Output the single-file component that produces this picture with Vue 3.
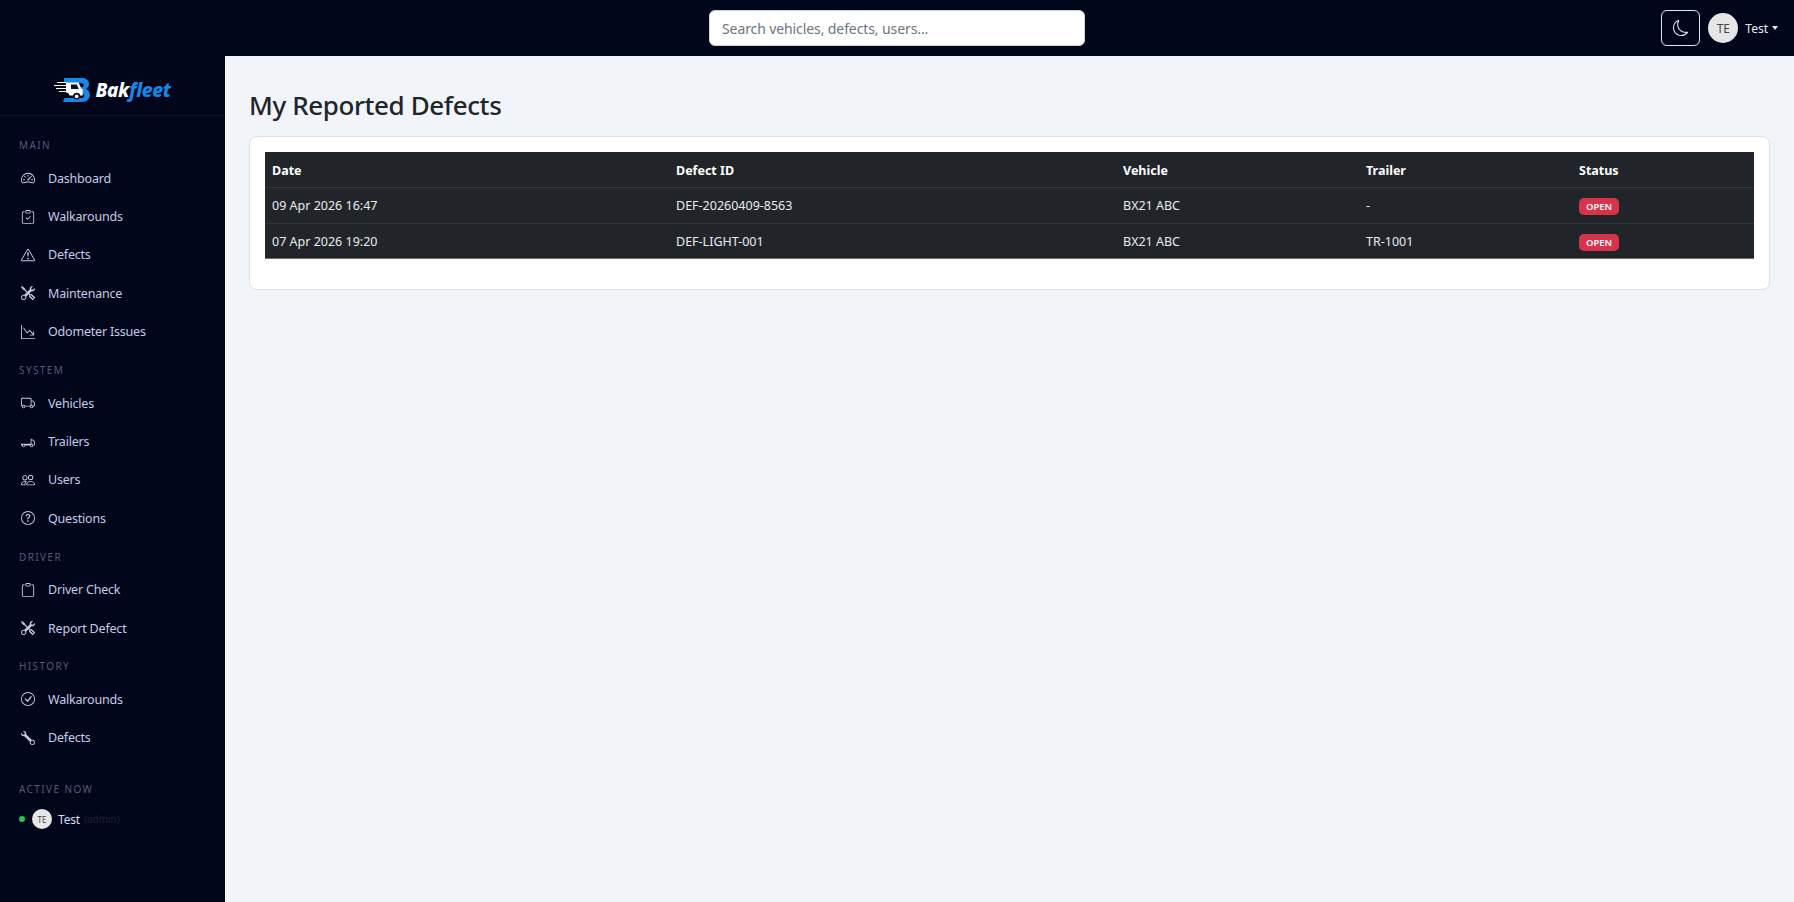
<script setup>
const clipboard = 'M4 1.5H3a2 2 0 0 0-2 2V14a2 2 0 0 0 2 2h10a2 2 0 0 0 2-2V3.5a2 2 0 0 0-2-2h-1v1h1a1 1 0 0 1 1 1V14a1 1 0 0 1-1 1H3a1 1 0 0 1-1-1V3.5a1 1 0 0 1 1-1h1v-1z'
const clipboardTop = 'M9.5 1a.5.5 0 0 1 .5.5v1a.5.5 0 0 1-.5.5h-3a.5.5 0 0 1-.5-.5v-1a.5.5 0 0 1 .5-.5h3zm-3-1A1.5 1.5 0 0 0 5 1.5v1A1.5 1.5 0 0 0 6.5 4h3A1.5 1.5 0 0 0 11 2.5v-1A1.5 1.5 0 0 0 9.5 0h-3z'
const circle = 'M8 15A7 7 0 1 1 8 1a7 7 0 0 1 0 14zm0 1A8 8 0 1 0 8 0a8 8 0 0 0 0 16z'

const icons = {
  gauge: [
    'M8 4a.5.5 0 0 1 .5.5V6a.5.5 0 0 1-1 0V4.5A.5.5 0 0 1 8 4zM3.732 5.732a.5.5 0 0 1 .707 0l.915.914a.5.5 0 1 1-.708.708l-.914-.915a.5.5 0 0 1 0-.707zM2 10a.5.5 0 0 1 .5-.5h1.586a.5.5 0 0 1 0 1H2.5A.5.5 0 0 1 2 10zm9.5 0a.5.5 0 0 1 .5-.5h1.5a.5.5 0 0 1 0 1H12a.5.5 0 0 1-.5-.5zm.754-4.246a.389.389 0 0 0-.527-.02L7.547 9.31a.91.91 0 1 0 1.302 1.258l3.434-4.297a.389.389 0 0 0-.029-.518z',
    'M0 10a8 8 0 1 1 15.547 2.661c-.442 1.253-1.845 1.602-2.932 1.25C11.309 13.488 9.475 13 8 13c-1.474 0-3.31.488-4.615.911-1.087.352-2.49.003-2.932-1.25A7.988 7.988 0 0 1 0 10zm8-7a7 7 0 0 0-6.603 9.329c.203.575.923.876 1.68.63C4.397 12.533 6.358 12 8 12s3.604.532 4.923.96c.757.245 1.477-.056 1.68-.631A7 7 0 0 0 8 3z'
  ],
  clipCheck: [
    'M10.854 7.146a.5.5 0 0 1 0 .708l-3 3a.5.5 0 0 1-.708 0l-1.5-1.5a.5.5 0 1 1 .708-.708L7.5 9.793l2.646-2.647a.5.5 0 0 1 .708 0z',
    clipboard,
    clipboardTop
  ],
  warn: [
    'M7.938 2.016A.13.13 0 0 1 8.002 2a.13.13 0 0 1 .063.016.146.146 0 0 1 .054.057l6.857 11.667c.036.06.035.124.002.183a.163.163 0 0 1-.054.06.116.116 0 0 1-.066.017H1.146a.115.115 0 0 1-.066-.017.163.163 0 0 1-.054-.06.176.176 0 0 1 .002-.183L7.884 2.073a.147.147 0 0 1 .054-.057zm1.044-.45a1.13 1.13 0 0 0-1.96 0L.165 13.233c-.457.778.091 1.767.98 1.767h13.713c.889 0 1.438-.99.98-1.767L8.982 1.566z',
    'M7.002 12a1 1 0 1 1 2 0 1 1 0 0 1-2 0zM7.1 5.995a.905.905 0 1 1 1.8 0l-.35 3.507a.552.552 0 0 1-1.1 0L7.1 5.995z'
  ],
  tools: [
    'M1 0 0 1l2.2 3.081a1 1 0 0 0 .815.419h.07a1 1 0 0 1 .708.293l2.675 2.675-2.617 2.654A3.003 3.003 0 0 0 0 13a3 3 0 1 0 5.878-.851l2.654-2.617.968.968-.305.914a1 1 0 0 0 .242 1.023l3.27 3.27a.997.997 0 0 0 1.414 0l1.586-1.586a.997.997 0 0 0 0-1.414l-3.27-3.27a1 1 0 0 0-1.023-.242L10.5 9.5l-.96-.96 2.68-2.643A3.005 3.005 0 0 0 16 3c0-.269-.035-.53-.102-.777l-2.14 2.141L12 4l-.364-1.757L13.777.102a3 3 0 0 0-3.675 3.68L7.462 6.46 4.793 3.793a1 1 0 0 1-.293-.707v-.071a1 1 0 0 0-.419-.814L1 0zm9.646 10.646a.5.5 0 0 1 .708 0l2.914 2.915a.5.5 0 0 1-.707.707l-2.915-2.914a.5.5 0 0 1 0-.708zM3 11l.471.242.529.026.287.445.445.287.026.529L5 13l-.242.471-.026.529-.445.287-.287.445-.529.026L3 15l-.471-.242L2 14.732l-.287-.445L1.268 14l-.026-.529L1 13l.242-.471.026-.529.445-.287.287-.445.529-.026L3 11z'
  ],
  graph: [
    'M0 0h1v15h15v1H0V0zm10 11.5a.5.5 0 0 0 .5.5h4a.5.5 0 0 0 .5-.5v-4a.5.5 0 0 0-1 0v2.6l-3.613-4.417a.5.5 0 0 0-.74-.037L7.06 8.233 3.404 3.206a.5.5 0 0 0-.808.588l4 5.5a.5.5 0 0 0 .758.06l2.609-2.61L13.445 11H10.5a.5.5 0 0 0-.5.5z'
  ],
  truck: [
    'M0 3.5A1.5 1.5 0 0 1 1.5 2h9A1.5 1.5 0 0 1 12 3.5V5h1.02a1.5 1.5 0 0 1 1.17.563l1.481 1.85a1.5 1.5 0 0 1 .329.938V10.5a1.5 1.5 0 0 1-1.5 1.5H14a2 2 0 1 1-4 0H5a2 2 0 1 1-3.998-.085A1.5 1.5 0 0 1 0 10.5v-7zm1.294 7.456A1.999 1.999 0 0 1 4.732 11h5.536a2.01 2.01 0 0 1 .732-.732V3.5a.5.5 0 0 0-.5-.5h-9a.5.5 0 0 0-.5.5v7a.5.5 0 0 0 .294.456zM12 10a2 2 0 0 1 1.732 1h.768a.5.5 0 0 0 .5-.5V8.35a.5.5 0 0 0-.11-.312l-1.48-1.85A.5.5 0 0 0 13.02 6H12v4zm-9 1a1 1 0 1 0 0 2 1 1 0 0 0 0-2zm9 0a1 1 0 1 0 0 2 1 1 0 0 0 0-2z'
  ],
  trailer: [
    'M11.5 4a.5.5 0 0 1 .5.5V5h1.02a1.5 1.5 0 0 1 1.17.563l1.481 1.85a1.5 1.5 0 0 1 .329.938V10.5a1.5 1.5 0 0 1-1.5 1.5H14a2 2 0 1 1-4 0H5a2 2 0 1 1-4 0 1 1 0 0 1-1-1v-1h11V4.5a.5.5 0 0 1 .5-.5zM3 11a1 1 0 1 0 0 2 1 1 0 0 0 0-2zm9 0a1 1 0 1 0 0 2 1 1 0 0 0 0-2zm1.732 0h.768a.5.5 0 0 0 .5-.5V8.35a.5.5 0 0 0-.11-.312l-1.48-1.85A.5.5 0 0 0 13.02 6H12v4a2 2 0 0 1 1.732 1z'
  ],
  users: [
    'M15 14s1 0 1-1-1-4-5-4-5 3-5 4 1 1 1 1h8zm-7.978-1A.261.261 0 0 1 7 12.996c.001-.264.167-1.03.76-1.72C8.312 10.629 9.282 10 11 10c1.717 0 2.687.63 3.24 1.276.593.69.758 1.457.76 1.72l-.008.002a.274.274 0 0 1-.014.002H7.022zM11 7a2 2 0 1 0 0-4 2 2 0 0 0 0 4zm3-2a3 3 0 1 1-6 0 3 3 0 0 1 6 0zM6.936 9.28a5.88 5.88 0 0 0-1.23-.247A7.35 7.35 0 0 0 5 9c-4 0-5 3-5 4 0 .667.333 1 1 1h4.216A2.238 2.238 0 0 1 5 13c0-1.01.377-2.042 1.09-2.904.243-.294.526-.569.846-.816zM4.92 10A5.42 5.42 0 0 0 4 13H1c0-.26.164-1.03.76-1.724.545-.636 1.492-1.256 3.16-1.275zM1.5 5.5a3 3 0 1 1 6 0 3 3 0 0 1-6 0zm3-2a2 2 0 1 0 0 4 2 2 0 0 0 0-4z'
  ],
  help: [
    circle,
    'M5.255 5.786a.237.237 0 0 0 .241.247h.825c.138 0 .248-.113.266-.25.09-.656.54-1.134 1.342-1.134.686 0 1.314.343 1.314 1.168 0 .635-.374.927-.965 1.371-.673.489-1.206 1.06-1.168 1.987l.003.217a.25.25 0 0 0 .25.246h.811a.25.25 0 0 0 .25-.25v-.105c0-.718.273-.927 1.01-1.486.609-.463 1.244-.977 1.244-2.056 0-1.511-1.276-2.241-2.673-2.241-1.267 0-2.655.59-2.75 2.286zm1.557 5.763c0 .533.425.927 1.01.927.609 0 1.028-.394 1.028-.927 0-.552-.42-.94-1.029-.94-.584 0-1.009.388-1.009.94z'
  ],
  clip: [clipboard, clipboardTop],
  check: [
    circle,
    'M10.97 4.97a.235.235 0 0 0-.02.022L7.477 9.417 5.384 7.323a.75.75 0 0 0-1.06 1.06L6.97 11.03a.75.75 0 0 0 1.079-.02l3.992-4.99a.75.75 0 0 0-1.071-1.05z'
  ],
  wrench: [
    'M.102 2.223A3.004 3.004 0 0 0 3.78 5.897l6.341 6.252A3.003 3.003 0 0 0 13 16a3 3 0 1 0-.851-5.878L5.897 3.781A3.004 3.004 0 0 0 2.223.1l2.141 2.142L4 4l-1.757.364L.102 2.223zm13.37 9.019.528.026.287.445.445.287.026.529L15 13l-.242.471-.026.529-.445.287-.287.445-.529.026L13 15l-.471-.242-.529-.026-.287-.445-.445-.287-.026-.529L11 13l.242-.471.026-.529.445-.287.287-.445.529-.026L13 11l.472.242z'
  ]
}

const sections = [
  { title: 'MAIN', items: [
    { label: 'Dashboard', icon: 'gauge' },
    { label: 'Walkarounds', icon: 'clipCheck' },
    { label: 'Defects', icon: 'warn' },
    { label: 'Maintenance', icon: 'tools' },
    { label: 'Odometer Issues', icon: 'graph' }
  ] },
  { title: 'SYSTEM', items: [
    { label: 'Vehicles', icon: 'truck' },
    { label: 'Trailers', icon: 'trailer' },
    { label: 'Users', icon: 'users' },
    { label: 'Questions', icon: 'help' }
  ] },
  { title: 'DRIVER', items: [
    { label: 'Driver Check', icon: 'clip' },
    { label: 'Report Defect', icon: 'tools' }
  ] },
  { title: 'HISTORY', items: [
    { label: 'Walkarounds', icon: 'check' },
    { label: 'Defects', icon: 'wrench' }
  ] }
]

const defects = [
  { date: '09 Apr 2026 16:47', id: 'DEF-20260409-8563', vehicle: 'BX21 ABC', trailer: '-', status: 'OPEN' },
  { date: '07 Apr 2026 19:20', id: 'DEF-LIGHT-001', vehicle: 'BX21 ABC', trailer: 'TR-1001', status: 'OPEN' }
]
</script>

<template>
  <div class="layout">
    <header class="topbar">
      <div></div>
      <input class="search" type="text" placeholder="Search vehicles, defects, users..." />
      <div class="top-right">
        <button class="theme-btn">
          <svg width="16" height="16" viewBox="0 0 16 16" fill="currentColor">
            <path d="M6 .278a.768.768 0 0 1 .08.858 7.208 7.208 0 0 0-.878 3.46c0 4.021 3.278 7.277 7.318 7.277.527 0 1.04-.055 1.533-.16a.787.787 0 0 1 .81.316.733.733 0 0 1-.031.893A8.349 8.349 0 0 1 8.344 16C3.734 16 0 12.286 0 7.71 0 4.266 2.114 1.312 5.124.06A.752.752 0 0 1 6 .278zM4.858 1.311A7.269 7.269 0 0 0 1.025 7.71c0 4.02 3.279 7.276 7.319 7.276a7.316 7.316 0 0 0 5.205-2.162c-.337.042-.68.063-1.029.063-4.61 0-8.343-3.714-8.343-8.291 0-1.167.242-2.278.681-3.286z" />
          </svg>
        </button>
        <span class="avatar">TE</span>
        <span class="user-name">Test</span>
        <span class="caret"></span>
      </div>
    </header>

    <div class="body-row">
      <aside class="sidebar">
        <div class="brand">
          <svg width="36" height="24" viewBox="0 0 36 24">
            <path d="M10 0h17c5 0 8 2 8 5.800 0 2.400-1.100 4.200-3 5.200 2.500 1 3.800 3 3.800 5.800C35.800 21.400 32.500 24 27.500 24H9l1.600-4h17c1.500 0 2.600-.9 2.600-2.300 0-1.500-1.100-2.400-2.600-2.400H26v-6h1.500c1.400 0 2.300-.8 2.300-2 0-1.300-.9-2.100-2.400-2.100H10z" fill="#1689e6" />
            <path d="M12 4.500h12.500l3 6.500h1.200v6.500h-2.500a3.600 3.600 0 0 0-7 0H15.500a3.600 3.600 0 0 0-3.500-3z" fill="#fff" />
            <path d="M17 6.500h5.800l2 4.500H17z" fill="#0a1226" />
            <circle cx="22.700" cy="18.300" r="2.600" fill="#fff" stroke="#0a1226" stroke-width="1.400" />
            <path d="M3 4.500h9M0 7.500h12M2 10.500h10M5 13.500h7" stroke="#fff" stroke-width="1.100" />
          </svg>
          <span class="brand-text">Bak<span class="brand-accent">fleet</span></span>
        </div>

        <nav class="nav">
          <div v-for="section in sections" :key="section.title">
            <div class="nav-title">{{ section.title }}</div>
            <a v-for="item in section.items" :key="item.label" class="nav-item">
              <svg class="nav-icon" viewBox="0 0 16 16" fill="currentColor">
                <path v-for="d in icons[item.icon]" :key="d" :d="d" />
              </svg>
              <span>{{ item.label }}</span>
            </a>
          </div>
        </nav>

        <div class="active-now">
          <div class="active-title">ACTIVE NOW</div>
          <div class="active-user">
            <span class="dot"></span>
            <span class="avatar small">TE</span>
            <span class="active-name">Test</span>
            <span class="active-role">(admin)</span>
          </div>
        </div>
      </aside>

      <main class="content">
        <h1>My Reported Defects</h1>
        <div class="card">
          <table>
            <colgroup>
              <col style="width: 404px" />
              <col style="width: 447px" />
              <col style="width: 243px" />
              <col style="width: 213px" />
              <col />
            </colgroup>
            <thead>
              <tr>
                <th>Date</th>
                <th>Defect ID</th>
                <th>Vehicle</th>
                <th>Trailer</th>
                <th>Status</th>
              </tr>
            </thead>
            <tbody>
              <tr v-for="row in defects" :key="row.id">
                <td>{{ row.date }}</td>
                <td>{{ row.id }}</td>
                <td>{{ row.vehicle }}</td>
                <td>{{ row.trailer }}</td>
                <td><span class="badge">{{ row.status }}</span></td>
              </tr>
            </tbody>
          </table>
        </div>
      </main>
    </div>
  </div>
</template>

<style>
html, body {
  margin: 0;
  background: #f1f4f9;
}
</style>

<style scoped>
.layout {
  display: flex;
  flex-direction: column;
  height: 902px;
  overflow: hidden;
  font-family: "Noto Sans", "Open Sans", sans-serif;
}

.topbar {
  height: 56px;
  flex-shrink: 0;
  display: grid;
  grid-template-columns: 1fr 376px 1fr;
  align-items: center;
  background: #02061a;
}

.search {
  height: 36px;
  box-sizing: border-box;
  border: 1px solid #ced4da;
  border-radius: 6px;
  padding: 0 12px;
  font-family: inherit;
  font-size: 14px;
  letter-spacing: -0.1px;
  background: #fff;
  outline: none;
}

.search::placeholder {
  color: #6c757d;
}

.top-right {
  display: flex;
  align-items: center;
  justify-content: flex-end;
  padding-right: 16px;
}

.theme-btn {
  width: 39px;
  height: 36px;
  display: flex;
  align-items: center;
  justify-content: center;
  padding: 0;
  border: 1px solid #dfe3ea;
  border-radius: 6px;
  background: transparent;
  color: #e8ebf2;
  margin-right: 8px;
}

.avatar {
  width: 30px;
  height: 30px;
  border-radius: 50%;
  background: #e6e6e6;
  color: #444;
  font-size: 12px;
  display: flex;
  align-items: center;
  justify-content: center;
  flex-shrink: 0;
}

.avatar.small {
  width: 20px;
  height: 20px;
  font-size: 8px;
}

.user-name {
  margin-left: 7px;
  color: #e9ecf5;
  font-size: 12px;
}

.caret {
  margin-left: 4px;
  border-top: 4px solid #e9ecf5;
  border-left: 3px solid transparent;
  border-right: 3px solid transparent;
}

.body-row {
  flex: 1;
  display: flex;
  min-height: 0;
}

.sidebar {
  width: 225px;
  flex-shrink: 0;
  background: #02061a;
}

.brand {
  height: 60px;
  box-sizing: border-box;
  display: flex;
  align-items: center;
  justify-content: center;
  gap: 5px;
  padding-top: 8px;
  border-bottom: 1px solid #0e1326;
}

.brand-text {
  font-size: 19px;
  font-weight: 800;
  font-style: italic;
  color: #fff;
  letter-spacing: -0.3px;
}

.brand-accent {
  color: #1689e6;
}

.nav {
  padding-top: 10px;
}

.nav-title {
  padding: 12px 19px 7px;
  font-size: 10px;
  line-height: 14px;
  letter-spacing: 1.4px;
  color: #525a7a;
}

.nav-item {
  height: 38.4px;
  display: flex;
  align-items: center;
  gap: 13px;
  padding-left: 21px;
  font-size: 12.5px;
  letter-spacing: -0.2px;
  color: #c3cbe8;
}

.nav-icon {
  width: 14px;
  height: 14px;
  flex-shrink: 0;
}

.active-now {
  padding: 25px 19px 0;
}

.active-title {
  font-size: 10px;
  line-height: 14px;
  letter-spacing: 1.4px;
  color: #525a7a;
}

.active-user {
  display: flex;
  align-items: center;
  margin-top: 13px;
}

.dot {
  width: 6px;
  height: 6px;
  border-radius: 50%;
  background: #22c55e;
  margin-right: 7px;
}

.active-name {
  margin-left: 6px;
  font-size: 12px;
  letter-spacing: -0.2px;
  color: #d6dcf2;
}

.active-role {
  margin-left: 4px;
  font-size: 10px;
  color: #1a2035;
}

.content {
  flex: 1;
  padding: 33px 24px 0;
  min-width: 0;
}

h1 {
  margin: 0 0 13px;
  font-size: 26px;
  line-height: 33px;
  font-weight: 500;
  letter-spacing: -0.4px;
  color: #212529;
}

.card {
  background: #fff;
  border: 1px solid #dcdfe5;
  border-radius: 8px;
  margin-top: 14px;
  padding: 15px 15px 30px;
}

table {
  width: 100%;
  table-layout: fixed;
  border-collapse: collapse;
  background: #212529;
  color: #e9ecef;
  font-size: 12.5px;
}

th, td {
  height: 35.6px;
  box-sizing: border-box;
  padding: 1px 7px 0;
  text-align: left;
  border-bottom: 1px solid #32383e;
}

th {
  color: #fff;
  font-weight: 700;
}

tbody tr:last-child td {
  border-bottom-color: #6c7075;
}

.badge {
  display: inline-block;
  padding: 0 7px;
  height: 17px;
  line-height: 17px;
  border-radius: 5px;
  background: #d7334a;
  color: #fff;
  font-size: 9.5px;
  font-weight: 600;
  vertical-align: middle;
}
</style>
